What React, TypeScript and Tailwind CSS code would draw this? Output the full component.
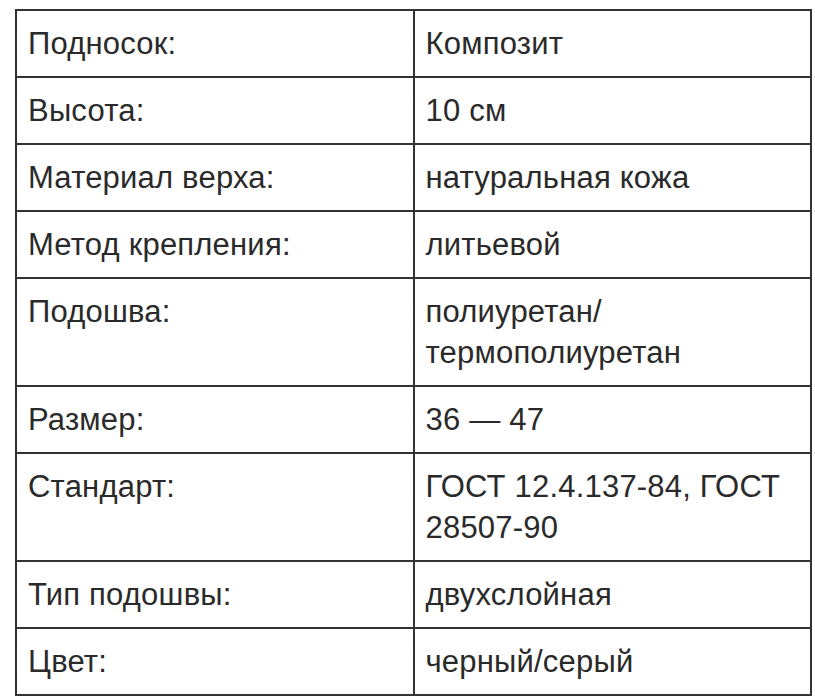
import React from 'react';

const rows: [string, string][] = [
  ['Подносок:', 'Композит'],
  ['Высота:', '10 см'],
  ['Материал верха:', 'натуральная кожа'],
  ['Метод крепления:', 'литьевой'],
  ['Подошва:', 'полиуретан/ термополиуретан'],
  ['Размер:', '36 — 47'],
  ['Стандарт:', 'ГОСТ 12.4.137-84, ГОСТ 28507-90'],
  ['Тип подошвы:', 'двухслойная'],
  ['Цвет:', 'черный/серый'],
];

const App: React.FC = () => {
  return (
    <div className="bg-white min-h-[700px] pt-[9px] pl-[15px] pr-[3px] font-['Liberation_Sans',Arial,sans-serif]">
      <table className="w-full table-fixed border-collapse border-2 border-[#333] text-[31px] leading-[41px] tracking-[0.2px] text-[#2a2a2a]">
        <tbody>
          {rows.map(([label, value]) => (
            <tr key={label}>
              <td className="w-1/2 border-2 border-[#333] px-[11px] py-3 align-top">{label}</td>
              <td className="w-1/2 border-2 border-[#333] px-[11px] py-3 align-top">{value}</td>
            </tr>
          ))}
        </tbody>
      </table>
    </div>
  );
};

export default App;
